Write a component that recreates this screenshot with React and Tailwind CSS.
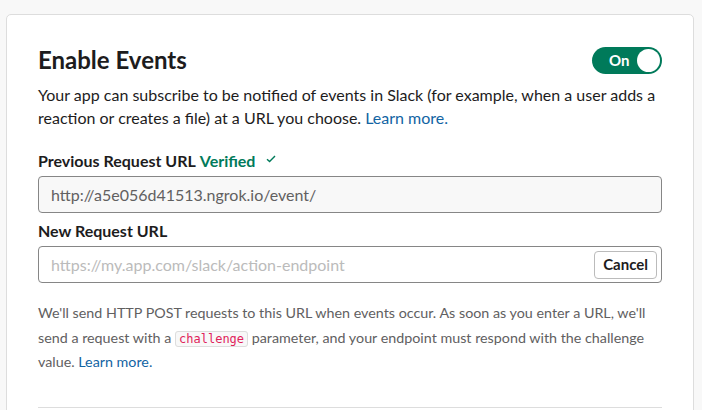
import React from "react";

function Toggle() {
  return (
    <div className="flex items-center justify-between w-[70px] h-[27px] rounded-full bg-[#007a5a] pl-[17px] pr-[2px]">
      <span className="text-white font-bold text-[15px] leading-none">On</span>
      <span className="w-[23px] h-[23px] rounded-full bg-white" />
    </div>
  );
}

export default function App() {
  return (
    <div
      className="min-h-[410px] h-[410px] overflow-hidden bg-[#f8f8f8] pt-[14px] px-[6px]"
      style={{ fontFamily: "Lato, 'Noto Sans', sans-serif" }}
    >
      <div className="w-[688px] h-[420px] bg-white border border-[#dddddd] rounded-[5px] px-[31px] pt-[29px] text-[#1d1c1d]">
        {/* HEADER */}
        <div className="flex items-center justify-between">
          <h2 className="text-[24px] leading-[32px] font-bold">Enable Events</h2>
          <Toggle />
        </div>

        <p className="mt-[7px] text-[16px] leading-[23px]">
          Your app can subscribe to be notified of events in Slack (for example, when a user adds a
          reaction or creates a file) at a URL you choose.{" "}
          <a className="text-[#1264a3]">Learn more.</a>
        </p>

        {/* PREVIOUS URL */}
        <div className="mt-[21px] flex items-center text-[16px] leading-[22px] font-bold">
          <span>Previous Request URL</span>
          <span className="ml-[4px] text-[#007a5a]">Verified</span>
          <svg className="ml-[11px] mb-[4px]" width="10" height="8" viewBox="0 0 10 8" fill="none">
            <path d="M1 4.2 L3.6 6.6 L9 1" stroke="#007a5a" strokeWidth="1.4" />
          </svg>
        </div>
        <div className="mt-[4px] h-[37px] flex items-center rounded-[4px] border border-[#868686] bg-[#f8f8f8] px-[12px] text-[16px] text-[#616061]">
          http://a5e056d41513.ngrok.io/event/
        </div>

        {/* NEW URL */}
        <div className="mt-[7px] text-[16px] leading-[22px] font-bold">New Request URL</div>
        <div className="mt-[4px] h-[37px] flex items-center justify-between rounded-[4px] border border-[#868686] bg-white pl-[12px] pr-[4px] text-[16px]">
          <span className="text-[#bbbbbb]">https://my.app.com/slack/action-endpoint</span>
          <button className="h-[28px] px-[8px] rounded-[4px] border border-[#bbbbbb] bg-white font-bold text-[15px] text-[#1d1c1d]">
            Cancel
          </button>
        </div>

        {/* HELP */}
        <p className="mt-[18px] text-[14.3px] leading-[24.5px] text-[#616061]">
          We'll send HTTP POST requests to this URL when events occur. As soon as you enter a URL, we'll
          send a request with a{" "}
          <code
            className="px-[3px] rounded-[3px] border border-[#dddddd] bg-[#f8f8f8] text-[12px] leading-[17px] text-[#e01e5a]"
            style={{ fontFamily: "'DejaVu Sans Mono', 'Liberation Mono', monospace" }}
          >
            challenge
          </code>{" "}
          parameter, and your endpoint must respond with the challenge value.{" "}
          <a className="text-[#1264a3]">Learn more.</a>
        </p>

        <div className="mt-[32px] border-t border-[#dddddd]" />
      </div>
    </div>
  );
}
